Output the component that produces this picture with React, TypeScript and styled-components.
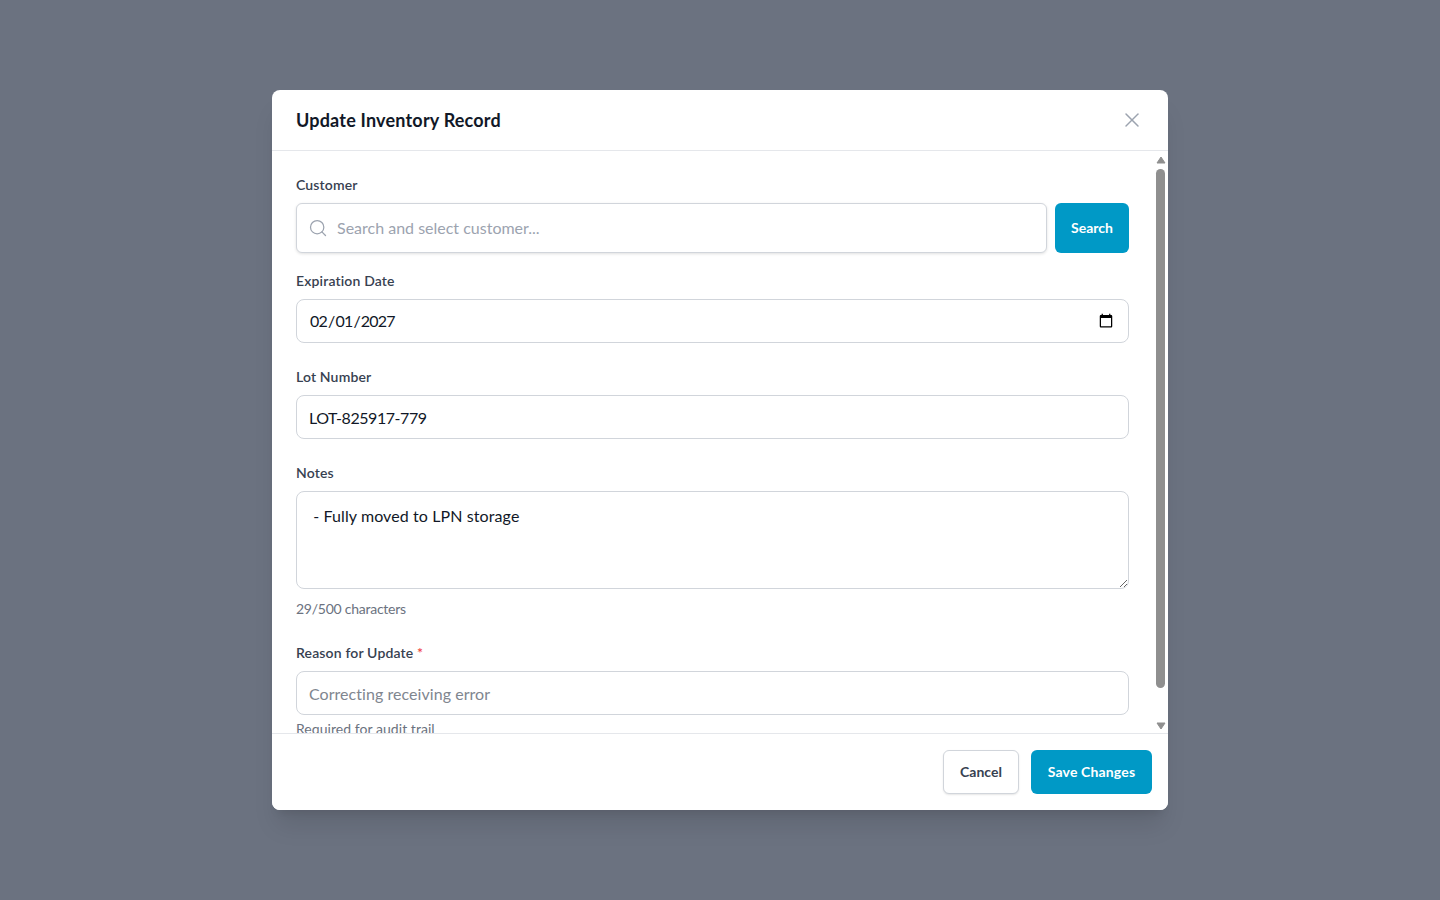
import React from "react";
import styled, { createGlobalStyle } from "styled-components";
import { Search, X } from "lucide-react";

const FONT = `Lato, "Noto Sans", sans-serif`;

const GlobalStyle = createGlobalStyle`
  * { box-sizing: border-box; }
  html, body { margin: 0; padding: 0; height: 100%; }
  body { font-family: ${FONT}; background: #6b7280; }
`;

const Overlay = styled.div`
  width: 100%;
  height: 100vh;
  display: flex;
  align-items: center;
  justify-content: center;
  background: #6b7280;
`;

const Modal = styled.div`
  width: 896px;
  height: 720px;
  display: flex;
  flex-direction: column;
  background: #ffffff;
  border-radius: 8px;
  overflow: hidden;
  box-shadow: 0 20px 25px -5px rgba(0, 0, 0, 0.1), 0 8px 10px -6px rgba(0, 0, 0, 0.1);
`;

const Header = styled.div`
  height: 61px;
  flex: none;
  display: flex;
  align-items: center;
  justify-content: space-between;
  padding: 0 24px;
  border-bottom: 1px solid #e5e7eb;
`;

const Title = styled.h2`
  margin: 0;
  font-size: 18px;
  line-height: 28px;
  font-weight: 700;
  letter-spacing: 0.2px;
  color: #111827;
`;

const CloseButton = styled.button`
  width: 24px;
  height: 24px;
  padding: 0;
  border: 0;
  background: none;
  color: #9ca3af;
  display: flex;
  align-items: center;
  justify-content: center;
  cursor: pointer;
`;

const Middle = styled.div`
  flex: 1;
  min-height: 0;
  display: flex;
`;

const Body = styled.div`
  flex: 1;
  min-width: 0;
  overflow: hidden;
  padding: 24px 24px 0;
  display: flex;
  flex-direction: column;
`;

const ScrollRail = styled.div`
  width: 15px;
  flex: none;
  display: flex;
  flex-direction: column;
  align-items: center;
  padding: 5px 0 3px;
`;

const ScrollArrow = styled.svg`
  width: 10px;
  height: 8px;
  flex: none;
  display: block;
  fill: #8f8f8f;
  stroke: #8f8f8f;
  stroke-width: 1;
  stroke-linejoin: round;
`;

const ScrollThumb = styled.div`
  width: 9px;
  height: 519px;
  margin: 5px 0 auto;
  background: #8f8f8f;
  border-radius: 5px;
`;

const Field = styled.div<{ $gap?: number }>`
  display: flex;
  flex-direction: column;
  flex: none;
  margin-bottom: ${(p) => p.$gap ?? 24}px;
`;

const Label = styled.label`
  display: block;
  font-size: 14px;
  line-height: 20px;
  font-weight: 600;
  letter-spacing: 0.15px;
  color: #374151;
  margin-bottom: 8px;
`;

const Required = styled.span`
  color: #ef4444;
`;

const SearchRow = styled.div`
  display: flex;
  gap: 8px;
`;

const SearchBox = styled.div`
  flex: 1;
  height: 50px;
  display: flex;
  align-items: center;
  gap: 9px;
  padding: 0 11px 0 12px;
  border: 1px solid #d1d5db;
  border-radius: 6px;
  background: #ffffff;
  box-shadow: 0 1px 3px rgba(0, 0, 0, 0.12);
  color: #9ca3af;
`;

const SearchInput = styled.input`
  flex: 1;
  border: 0;
  outline: 0;
  padding: 0 0 2px;
  background: none;
  font-family: ${FONT};
  font-size: 16px;
  color: #111827;

  &::placeholder {
    color: #9ca3af;
    opacity: 1;
  }
`;

const SearchGlyph = styled(Search)`
  margin-left: -1px;
  flex: none;
`;

const PrimaryButton = styled.button<{ $width: number; $height: number; $spacing?: number }>`
  width: ${(p) => p.$width}px;
  height: ${(p) => p.$height}px;
  padding: 0 0 2px;
  border: 0;
  border-radius: 6px;
  background: #0099c6;
  color: #ffffff;
  font-family: ${FONT};
  font-size: 14px;
  font-weight: 700;
  letter-spacing: ${(p) => p.$spacing ?? 0}px;
  cursor: pointer;
`;

const TextInput = styled.input<{ $spacing?: number }>`
  width: 100%;
  height: 44px;
  padding: 0 12px;
  border: 1px solid #d1d5db;
  border-radius: 8px;
  background: #ffffff;
  outline: 0;
  font-family: ${FONT};
  font-size: 16px;
  letter-spacing: ${(p) => p.$spacing ?? 0}px;
  color: #111827;

  &::placeholder {
    color: #80868f;
    opacity: 1;
  }
`;

const DateInput = styled(TextInput)`
  padding-bottom: 2px;

  &::-webkit-calendar-picker-indicator {
    margin-top: 2px;
  }
`;

const NotesArea = styled.textarea`
  display: block;
  width: 100%;
  height: 98px;
  padding: 12px;
  border: 1px solid #d1d5db;
  border-radius: 8px;
  background: #ffffff;
  outline: 0;
  font-family: ${FONT};
  font-size: 16px;
  line-height: 24px;
  letter-spacing: 0.1px;
  color: #111827;
  resize: vertical;
`;

const Hint = styled.div<{ $top: number; $spacing?: number }>`
  margin-top: ${(p) => p.$top}px;
  font-size: 14px;
  line-height: 20px;
  letter-spacing: ${(p) => p.$spacing ?? 0}px;
  color: #6b7280;
`;

const Footer = styled.div`
  height: 77px;
  flex: none;
  display: flex;
  align-items: center;
  justify-content: flex-end;
  gap: 12px;
  padding: 0 16px;
  border-top: 1px solid #e5e7eb;
  background: #ffffff;
`;

const CancelButton = styled.button`
  width: 76px;
  height: 44px;
  padding: 0 0 2px;
  border: 1px solid #d1d5db;
  border-radius: 6px;
  background: #ffffff;
  box-shadow: 0 1px 2px rgba(0, 0, 0, 0.1);
  color: #374151;
  font-family: ${FONT};
  font-size: 14px;
  font-weight: 700;
  cursor: pointer;
`;

export default function App() {
  return (
    <>
      <GlobalStyle />
      <Overlay>
        <Modal>
          <Header>
            <Title>Update Inventory Record</Title>
            <CloseButton aria-label="Close">
              <X size={24} strokeWidth={1.5} />
            </CloseButton>
          </Header>
          <Middle>
            <Body>
              <Field $gap={18}>
                <Label>Customer</Label>
                <SearchRow>
                  <SearchBox>
                    <SearchGlyph size={20} strokeWidth={1.5} />
                    <SearchInput placeholder="Search and select customer..." readOnly />
                  </SearchBox>
                  <PrimaryButton $width={74} $height={50}>Search</PrimaryButton>
                </SearchRow>
              </Field>
              <Field>
                <Label>Expiration Date</Label>
                <DateInput type="date" defaultValue="2027-02-01" $spacing={-0.8} />
              </Field>
              <Field>
                <Label>Lot Number</Label>
                <TextInput defaultValue="LOT-825917-779" $spacing={-0.45} />
              </Field>
              <Field>
                <Label>Notes</Label>
                <NotesArea defaultValue=" - Fully moved to LPN storage" />
                <Hint $top={10} $spacing={-0.25}>29/500 characters</Hint>
              </Field>
              <Field $gap={0}>
                <Label>
                  Reason for Update <Required>*</Required>
                </Label>
                <TextInput placeholder="Correcting receiving error" $spacing={0.05} />
                <Hint $top={4} $spacing={0.05}>Required for audit trail</Hint>
              </Field>
            </Body>
            <ScrollRail>
              <ScrollArrow viewBox="0 0 10 8"><path d="M5 1 L9 7 L1 7 Z" /></ScrollArrow>
              <ScrollThumb />
              <ScrollArrow viewBox="0 0 10 8"><path d="M1 1 L9 1 L5 7 Z" /></ScrollArrow>
            </ScrollRail>
          </Middle>
          <Footer>
            <CancelButton>Cancel</CancelButton>
            <PrimaryButton $width={121} $height={44} $spacing={0.15}>Save Changes</PrimaryButton>
          </Footer>
        </Modal>
      </Overlay>
    </>
  );
}
